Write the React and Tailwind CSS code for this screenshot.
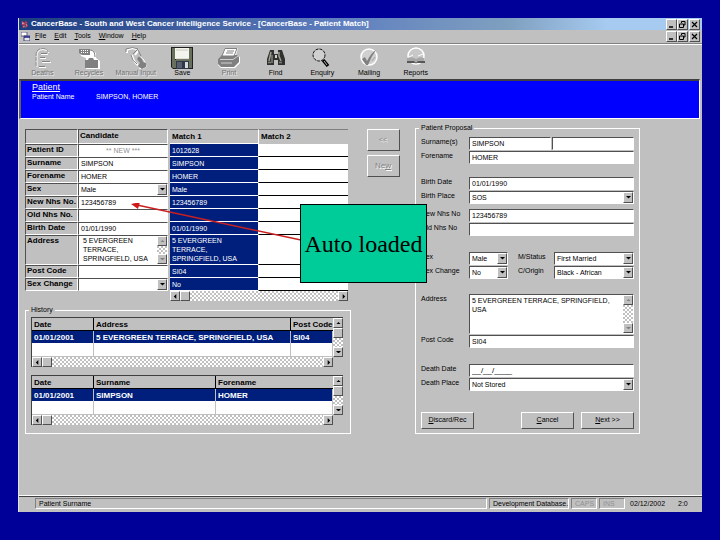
import clsx from "clsx";

const menus = ["File", "Edit", "Tools", "Window", "Help"];

const sunken = "border border-t-[#505050] border-l-[#505050] border-b-white border-r-white bg-white";
const raised = "border border-t-white border-l-white border-b-[#505050] border-r-[#505050] bg-[#c0c0c0]";
const checker = "bg-[repeating-conic-gradient(#c0c0c0_0_25%,#ffffff_0_50%)] bg-[length:4px_4px]";

const arrows = {
    up: "M3 0L6 3H0Z",
    down: "M0 0H6L3 3Z",
    left: "M4 0V6L1 3Z",
    right: "M2 0V6L5 3Z",
};

const Arrow = ({ dir, dim }) => (
    <svg viewBox={dir === "up" || dir === "down" ? "0 0 6 3" : "0 0 6 6"} className={clsx("w-[5px]", dim ? "text-[#808080]" : "text-black")}>
        <path d={arrows[dir]} fill="currentColor" />
    </svg>
);

const ScrollButton = ({ dir, dim }) => (
    <button aria-label={`Scroll ${dir}`} className={clsx("flex size-[10px] shrink-0 items-center justify-center", raised)}>
        <Arrow dir={dir} dim={dim} />
    </button>
);

const HScroll = () => (
    <div className={clsx("flex h-[10px]", checker)}>
        <ScrollButton dir="left" />
        <div className={clsx("w-[10px]", raised)}></div>
        <div className="flex-1"></div>
        <ScrollButton dir="right" />
    </div>
);

const VScroll = ({ thumb, dim }) => (
    <div className={clsx("flex w-[10px] shrink-0 flex-col", checker)}>
        <ScrollButton dir="up" dim={dim} />
        {thumb && <div className={clsx("h-[10px]", raised)}></div>}
        <div className="flex-1"></div>
        <ScrollButton dir="down" dim={dim} />
    </div>
);

const TextBox = ({ className, ...props }) => (
    <input type="text" className={clsx("block h-[13px] w-full min-w-0 px-[2px] leading-[11px]", sunken, className)} {...props} />
);

const DropDown = ({ id, value }) => (
    <div className="relative w-full">
        <select id={id} defaultValue={value} className={clsx("block h-[13px] w-full appearance-none px-[2px] leading-[11px]", sunken)}>
            <option>{value}</option>
        </select>
        <span className={clsx("pointer-events-none absolute top-px right-px flex h-[11px] w-[10px] items-center justify-center", raised)}>
            <Arrow dir="down" />
        </span>
    </div>
);

/* ---------- toolbar icons ---------- */

const icons = {
    Deaths: (
        <g fill="none">
            <path d="M6 20V9Q6 3 12 2.500Q17 3 18 6" stroke="#ffffff" />
            <path d="M5 19V8Q5 2 11 1.500Q16 1 17 5" stroke="#909090" strokeDasharray="4 1" />
            <path d="M10 6.500h6M9 10.500h5M11 14.500h8M8 19.500h6" stroke="#808080" />
            <path d="M10 7.500h7M9 11.500h6M11 15.500h9M8 20.500h7" stroke="#ffffff" />
        </g>
    ),
    Recycles: (
        <g>
            <path d="M2 3h11l5 3v5l4 3v8H8V11L3 9Z" fill="#ffffff" />
            <path d="M1 2h11v6H4L1 6ZM7 13h3l1-2h4l1 2h4v8H7Z" fill="#808080" />
            <path d="M3 3.500h8M3 5.500h8" stroke="#ffffff" strokeDasharray="1 1" />
            <path d="M12 3q5 0 5 7" stroke="#808080" fill="none" />
        </g>
    ),
    "Manual Input": (
        <g fill="none">
            <path d="M2 6V3Q9-1 13 4L10 8M7 8Q9 16 13 18" stroke="#ffffff" strokeWidth="2" />
            <path d="M1 5V2Q8-1 13 2L8 7M6 8Q7 14 12 17M13 3l3 6" stroke="#808080" strokeWidth="1" />
            <path d="M14 9l4 3 2 3 1 5-4 2-3-1" stroke="#ffffff" />
            <path d="M14 9l3 3 1 3 3 1v4l-4 2-4-3 2-3-3-4Z" fill="#808080" />
        </g>
    ),
    Save: (
        <g>
            <path d="M0 0H22V22H2L0 20Z" fill="#202020" />
            <path d="M1 1H4V13H18V1H21V21H2L1 20Z" fill="#68705c" />
            <path d="M4 1H18V12H4Z" fill="#f4f4ee" />
            <path d="M5 3H17M5 12H18" stroke="#c8c8b8" />
            <path d="M5 14H18V22H5Z" fill="#303848" />
            <path d="M14 15H17V21H14Z" fill="#d8d8e0" />
            <path d="M6 15H11V21H6Z" fill="#586070" />
        </g>
    ),
    Print: (
        <g>
            <path d="M7 1H20L18 8L22 10V16L17 21H3L0 18V12L4 9Z" fill="#ffffff" />
            <path d="M0 12L4 8H19L21 10V15L16 20H3L0 17Z" fill="#808080" />
            <path d="M7 1.500H19L16 9H4Z" fill="#ffffff" stroke="#808080" />
            <path d="M9 4H16M8 6H15" stroke="#808080" />
            <path d="M2 12.500H15L20 9M3 16H14" stroke="#d0d0d0" fill="none" />
        </g>
    ),
    Find: (
        <g>
            <path d="M5 3h4v4h4V3h4l3 9v6h-7v-5H9v5H2v-6Z" fill="#303030" />
            <path d="M6 5L4 14M14 5V9L16 14" stroke="#a0a090" strokeWidth="1.500" />
            <path d="M3 15.500h3M14 15.500h3M7 8v8" stroke="#808078" strokeWidth="1.500" />
            <path d="M10 8h2v3h-2Z" fill="#d0d0d0" />
        </g>
    ),
    Enquiry: (
        <g>
            <circle cx="8" cy="8" r="6" fill="#d0d0d0" stroke="#101010" strokeDasharray="3 1" />
            <path d="M12 13L17 19" stroke="#000000" strokeWidth="3.500" />
            <path d="M13 14L16 18" stroke="#b0b0b0" />
        </g>
    ),
    Mailing: (
        <g>
            <circle cx="11" cy="10" r="8" fill="#d0d0d0" stroke="#ffffff" strokeWidth="1.500" />
            <path d="M4 12L7 10L9 14Q13 6 18 3Q13 10 10 18H8Z" fill="#808080" />
            <path d="M14 14L17 10" stroke="#a0a0a0" />
        </g>
    ),
    Reports: (
        <g>
            <circle cx="11" cy="9" r="8" fill="#c8c8c8" stroke="#ffffff" strokeWidth="1.500" />
            <path d="M2 11Q7 9 11 12Q15 9 19 11V15H13L11 17L9 15H2Z" fill="#a8a8a8" />
            <path d="M2 14H9L11 16L13 14H20V16H2Z" fill="#585858" />
            <path d="M4 10L8 8M13 9L18 7" stroke="#ffffff" />
        </g>
    ),
};

const disabledTools = ["Deaths", "Recycles", "Manual Input", "Print"];

const Toolbar = () => (
    <div className="h-[34px] pt-[2px]">
        <div className="grid w-[420px] grid-cols-9">
            {Object.keys(icons).map((name) => (
                <button key={name} disabled={disabledTools.includes(name)} className="flex flex-col items-center whitespace-nowrap disabled:text-[#707070] disabled:[text-shadow:1px_1px_0_#e8e8e8]">
                    <svg viewBox="0 0 22 22" className="size-[22px]">{icons[name]}</svg>
                    <span className="leading-[8px]">{name}</span>
                </button>
            ))}
        </div>
    </div>
);

const WindowButtons = () => (
    <div className="ml-auto flex pr-[2px]">
        <button aria-label="Minimise" className={clsx("size-[11px]", raised)}>
            <svg viewBox="0 0 9 9" className="size-[9px]"><path d="M2 7H6" stroke="#000000" strokeWidth="1.500" /></svg>
        </button>
        <button aria-label="Restore" className={clsx("size-[11px]", raised)}>
            <svg viewBox="0 0 9 9" className="size-[9px]" fill="none" stroke="#000000">
                <path d="M3.500 3V1.500H7V5H5.500M1.500 4H5.500V7.500H1.500Z" />
            </svg>
        </button>
        <button aria-label="Close" className={clsx("ml-[1px] size-[11px]", raised)}>
            <svg viewBox="0 0 9 9" className="size-[9px]"><path d="M2 2L7 7M7 2L2 7" stroke="#000000" strokeWidth="1.200" /></svg>
        </button>
    </div>
);

/* ---------- matching grid ---------- */

const address = "5 EVERGREEN\nTERRACE,\nSPRINGFIELD, USA";

const matchRows = [
    { label: "Patient ID", id: "c-id", value: "** NEW ***", match: "1012628", disabled: true },
    { label: "Surname", id: "c-surname", value: "SIMPSON", match: "SIMPSON" },
    { label: "Forename", id: "c-forename", value: "HOMER", match: "HOMER" },
    { label: "Sex", id: "c-sex", value: "Male", match: "Male", kind: "select" },
    { label: "New Nhs No.", id: "c-new-nhs", value: "123456789", match: "123456789" },
    { label: "Old Nhs No.", id: "c-old-nhs", value: "", match: "" },
    { label: "Birth Date", id: "c-birth", value: "01/01/1990", match: "01/01/1990" },
    { label: "Address", id: "c-address", value: address, match: address, kind: "area" },
    { label: "Post Code", id: "c-post", value: "", match: "SI04" },
    { label: "Sex Change", id: "c-change", value: "", match: "No", kind: "select" },
];

const labelCell = "border border-t-[#505050] border-l-[#505050] border-b-white border-r-white bg-[#c0c0c0]";

const CandidateField = ({ row }) => {
    if (row.kind === "select") return <DropDown id={row.id} value={row.value} />;
    if (row.kind === "area") {
        return (
            <div className={clsx("flex h-[30px]", sunken)}>
                <textarea id={row.id} defaultValue={row.value} className="block h-[28px] min-w-0 flex-1 resize-none overflow-hidden pl-[4px] leading-[9px] whitespace-pre"></textarea>
                <VScroll dim />
            </div>
        );
    }
    return <TextBox id={row.id} defaultValue={row.value} disabled={row.disabled} className="disabled:text-center disabled:text-[#909090]" />;
};

const MatchGrid = () => (
    <div className="mr-[3px]">
        <table className="w-full table-fixed border-separate border-spacing-0 text-left leading-[9px]">
            <colgroup>
                <col className="w-[53px]" />
                <col className="w-[92px]" />
                <col className="w-[88px]" />
                <col />
            </colgroup>
            <thead className="text-[8px]">
                <tr className="h-[15px]">
                    <td className={clsx("p-0", labelCell)}></td>
                    <th scope="col" className="p-0 pr-[2px]"><div className={clsx("h-[15px] pt-[1px] pl-[1px]", labelCell)}>Candidate</div></th>
                    <th scope="col" className="border-t border-b border-t-[#808080] border-b-white p-0 pt-[2px] pl-[2px] align-top">Match 1</th>
                    <th scope="col" className="border-t border-l border-t-[#808080] border-l-white p-0 pt-[2px] pl-[2px] align-top">Match 2</th>
                </tr>
            </thead>
            <tbody>
                {matchRows.map((row) => (
                    <tr key={row.id} className={row.kind === "area" ? "h-[30px]" : "h-[13px]"}>
                        <th scope="row" className={clsx("p-0 pl-px align-top text-[8px] whitespace-nowrap", labelCell)}>
                            <label htmlFor={row.id}>{row.label}</label>
                        </th>
                        <td className="p-0 pr-[2px]"><CandidateField row={row} /></td>
                        <td className="border-b border-white bg-[#001f7c] p-0 pl-[2px] whitespace-pre text-white">{row.match}</td>
                        <td className="border-b border-l border-b-black border-l-white bg-white p-0"></td>
                    </tr>
                ))}
            </tbody>
        </table>
        <div className="ml-[145px]"><HScroll /></div>
    </div>
);

/* ---------- history lists ---------- */

const HistoryTable = ({ cols, widths, values }) => (
    <div className="border-t border-l border-[#404040]">
        <div className="flex">
            <table className="w-full min-w-0 flex-1 table-fixed border-separate border-spacing-0 text-left text-[8px] leading-[9px] font-bold">
                <colgroup>
                    {widths.map((w, i) => <col key={i} className={w} />)}
                </colgroup>
                <thead>
                    <tr className="h-[13px]">
                        {cols.map((c, i) => (
                            <th key={c} scope="col" className={clsx("border-b border-black bg-[#c0c0c0] p-0 pl-[2px] whitespace-nowrap", i < cols.length - 1 && "border-r")}>{c}</th>
                        ))}
                    </tr>
                </thead>
                <tbody>
                    <tr className="h-[12px] bg-[#001f7c] text-white">
                        {values.map((v) => (
                            <td key={v} className="border-r border-[#c0c0c0] p-0 pl-[2px] whitespace-nowrap">{v}</td>
                        ))}
                    </tr>
                    <tr className="h-[14px] bg-white">
                        {values.map((v) => <td key={v} className="border-r border-b border-[#c0c0c0] p-0"></td>)}
                    </tr>
                </tbody>
            </table>
            <VScroll thumb />
        </div>
        <div className="mr-[10px]"><HScroll /></div>
    </div>
);

const Group = ({ title, className, children }) => (
    <fieldset className={clsx("min-w-0 border border-white", className)}>
        <legend className="ml-[3px] px-[2px] leading-[8px]">{title}</legend>
        {children}
    </fieldset>
);

/* ---------- proposal form ---------- */

const Row = ({ label, id, children }) => (
    <div className="flex min-h-[14px]">
        <label htmlFor={id} className="w-[48px] shrink-0 leading-[9px] whitespace-nowrap">{label}</label>
        <div className="flex min-w-0 flex-1 gap-[1px]">{children}</div>
    </div>
);

const PairRow = ({ label, id, value, label2, id2, value2 }) => (
    <Row label={label} id={id}>
        <div className="w-[39px] shrink-0"><DropDown id={id} value={value} /></div>
        <label htmlFor={id2} className="ml-[9px] w-[35px] shrink-0 leading-[9px]">{label2}</label>
        <DropDown id={id2} value={value2} />
    </Row>
);

const FormButton = ({ hot, children, className }) => (
    <button className={clsx("h-[17px]", raised, className)}>
        <span className="underline">{hot}</span>{children}
    </button>
);

const Proposal = () => (
    <Group title="Patient Proposal">
        <form className="flex flex-col px-[5px] pt-[5px] pb-[4px]" onSubmit={(e) => e.preventDefault()}>
            <Row label="Surname(s)" id="p-surname">
                <TextBox id="p-surname" defaultValue="SIMPSON" />
                <TextBox aria-label="Second surname" />
            </Row>
            <Row label="Forename" id="p-forename"><TextBox id="p-forename" defaultValue="HOMER" /></Row>
            <div className="mt-[12px]">
                <Row label="Birth Date" id="p-birth"><TextBox id="p-birth" defaultValue="01/01/1990" /></Row>
                <Row label="Birth Place" id="p-place"><DropDown id="p-place" value="SOS" /></Row>
            </div>
            <div className="mt-[4px]">
                <Row label="New Nhs No" id="p-new"><TextBox id="p-new" defaultValue="123456789" /></Row>
                <Row label="Old Nhs No" id="p-old"><TextBox id="p-old" /></Row>
            </div>
            <div className="mt-[15px]">
                <PairRow label="Sex" id="p-sex" value="Male" label2="M/Status" id2="p-status" value2="First Married" />
                <PairRow label="Sex Change" id="p-change" value="No" label2="C/Origin" id2="p-origin" value2="Black - African" />
            </div>
            <div className="mt-[14px]">
                <Row label="Address" id="p-address">
                    <div className={clsx("mb-[1px] flex h-[40px] w-full", sunken)}>
                        <textarea id="p-address" defaultValue={"5 EVERGREEN TERRACE, SPRINGFIELD,\nUSA"} className="block min-w-0 flex-1 resize-none overflow-hidden pt-[1px] pl-[2px] leading-[9px] whitespace-pre"></textarea>
                        <VScroll dim />
                    </div>
                </Row>
                <Row label="Post Code" id="p-post"><TextBox id="p-post" defaultValue="SI04" /></Row>
            </div>
            <div className="mt-[15px]">
                <Row label="Death Date" id="p-death"><TextBox id="p-death" defaultValue="__/__/____" className="text-[8px]" /></Row>
                <Row label="Death Place" id="p-dplace"><DropDown id="p-dplace" value="Not Stored" /></Row>
            </div>
            <div className="mt-[20px] flex">
                <FormButton hot="D" className="w-[53px]">iscard/Rec</FormButton>
                <FormButton hot="C" className="mr-[7px] ml-auto w-[53px]">ancel</FormButton>
                <FormButton hot="N" className="w-[53px]">ext &gt;&gt;</FormButton>
            </div>
        </form>
    </Group>
);

const embossed = "text-[#808080] [text-shadow:1px_1px_0_#ffffff]";

const Callout = () => (
    <>
        <svg viewBox="0 0 170 38" className="absolute top-[84px] left-[112px] h-[38px] w-[170px]">
            <path d="M6 2L170 37" stroke="#c82020" strokeWidth="1.500" />
            <path d="M0 1L9 -1L7 6Z" fill="#d01818" />
        </svg>
        <div className="absolute top-[85px] left-[281px] flex h-[79px] w-[127px] items-center justify-center border border-black bg-[#00cc99] font-['Liberation_Serif',serif] text-[24px] whitespace-nowrap">
            Auto loaded
        </div>
    </>
);

const panel = "border border-t-[#808080] border-l-[#808080] border-b-white border-r-white px-[3px] leading-[10px]";

export default function App() {
    return (
        <div className="flex min-h-screen flex-col bg-[#000099] px-[18px] pt-[18px] pb-[28px] font-['Liberation_Sans',sans-serif] text-[7px] text-black">
            <div className="flex flex-1 flex-col border-l border-[#e0e0e0] bg-[#c0c0c0]">
                <header className="flex h-[12px] items-center gap-[3px] bg-[linear-gradient(90deg,#1c3c80_0%,#6080c0_48%,#80a0c0_72%,#a6caf0_86%)] pl-[2px]">
                    <svg viewBox="0 0 8 9" className="h-[9px] w-[7px]">
                        <path d="M1 1l2 2M5 1l2 2M1 5l3-2 3 3-2 2M2 8l2-3" stroke="#d04050" fill="none" strokeWidth="1.500" />
                        <path d="M1 3h2M6 5h1M3 7h1" stroke="#e8e8f8" />
                    </svg>
                    <h1 className="text-[8px] font-bold whitespace-nowrap text-white">CancerBase - South and West Cancer Intelligence Service - [CancerBase - Patient Match]</h1>
                    <WindowButtons />
                </header>
                <nav className="flex h-[14px] items-center gap-[8px] border-b border-[#808080] pl-[2px]">
                    <svg viewBox="0 0 9 9" className="-mr-[3px] size-[9px]">
                        <path d="M0 0h6v4H0Z" fill="#ffffff" stroke="#606080" />
                        <path d="M3 4h6v5H3Z" fill="#e8e8e8" stroke="#404080" />
                        <path d="M3 5h6" stroke="#202080" strokeWidth="1.500" />
                    </svg>
                    {menus.map((m) => (
                        <button key={m}><span className="underline">{m[0]}</span>{m.slice(1)}</button>
                    ))}
                    <WindowButtons />
                </nav>
                <div className="border-t border-white"><Toolbar /></div>
                <section className="mr-[2px] h-[40px] border-t-2 border-r border-b border-l-2 border-t-[#404040] border-r-white border-b-white border-l-[#606060] bg-[#0000ff] pt-[2px] pl-[11px] text-white">
                    <h2 className="text-[9px] leading-[9px] underline">Patient</h2>
                    <div className="flex leading-[9px]">
                        <span className="w-[64px]">Patient Name</span>
                        <span>SIMPSON, HOMER</span>
                    </div>
                </section>

                <main className="relative grid flex-1 grid-cols-[326fr_64fr_225fr] items-start pr-[62px] pl-[6px]">
                    <div className="pt-[10px]">
                        <MatchGrid />
                        <Group title="History" className="mt-[5px]">
                            <div className="flex flex-col gap-[8px] pt-[3px] pr-[7px] pb-[8px] pl-[5px]">
                                <HistoryTable cols={["Date", "Address", "Post Code"]} widths={["w-[62px]", "w-[197px]", ""]} values={["01/01/2001", "5 EVERGREEN TERRACE, SPRINGFIELD, USA", "SI04"]} />
                                <HistoryTable cols={["Date", "Surname", "Forename"]} widths={["w-[62px]", "w-[122px]", ""]} values={["01/01/2001", "SIMPSON", "HOMER"]} />
                            </div>
                        </Group>
                    </div>
                    <div className="flex flex-col items-center gap-[4px] pt-[10px]">
                        <button disabled className={clsx("h-[22px] w-[33px]", raised, embossed)}>&lt;&lt;</button>
                        <button disabled className={clsx("h-[22px] w-[33px] text-[8px]", raised, embossed)}>Ne<u>w</u></button>
                    </div>
                    <div className="pt-[5px]"><Proposal /></div>
                    <Callout />
                </main>

                <footer className="flex h-[17px] border-t border-white whitespace-nowrap">
                    <div className="flex flex-1 gap-[2px] border-t border-[#404040] pt-[1px] pb-[3px] pl-[16px]">
                        <div className={clsx("flex-1", panel)}>Patient Surname</div>
                        <div className={clsx("w-[80px]", panel)}>Development Database.</div>
                        <div className={clsx("w-[26px] text-[#909090]", panel)}>CAPS</div>
                        <div className={clsx("w-[26px] text-[#909090]", panel)}>INS</div>
                        <div className="w-[42px] pt-[1px] pl-[3px] leading-[10px]">02/12/2002</div>
                        <div className="w-[31px] pt-[1px] pl-[7px] leading-[10px]">2:0</div>
                    </div>
                </footer>
            </div>
        </div>
    );
}
